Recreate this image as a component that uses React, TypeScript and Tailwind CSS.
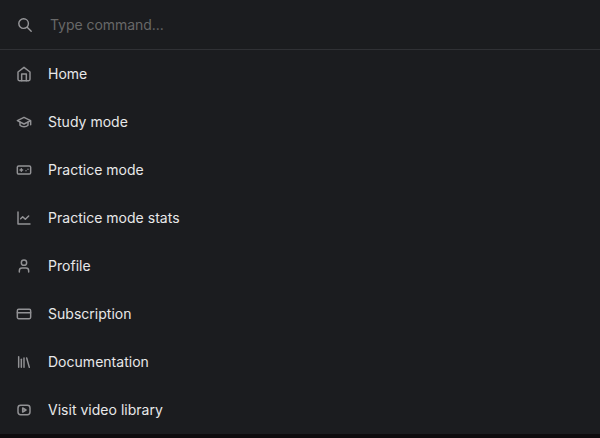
import React from "react";
import { User, CreditCard, Library } from "lucide-react";

const Svg = ({ children }: { children: React.ReactNode }) => (
  <svg viewBox="0 0 24 24" fill="none" stroke="currentColor" strokeWidth="2.2" strokeLinecap="round" strokeLinejoin="round" className="size-4 shrink-0">{children}</svg>
);

const items: { label: string; icon: React.ReactNode }[] = [
  { label: "Home", icon: <Svg><path d="M3 9l9-7 9 7v11a2 2 0 0 1-2 2H5a2 2 0 0 1-2-2z" /><path d="M8.5 22V12h7v10" /></Svg> },
  { label: "Study mode", icon: <Svg><path d="M22 10v6M2 10l10-5 10 5-10 5z" /><path d="M6 12v5c3 3 9 3 12 0v-5" /></Svg> },
  { label: "Practice mode", icon: <Svg><rect x="2" y="6" width="20" height="12" rx="2" /><path d="M6 12h4M8 10v4M15 13h.01M18 11h.01" /></Svg> },
  { label: "Practice mode stats", icon: <Svg><path d="M3 3v18h18" /><path d="M19 9l-5 5-4-4-3 3" /></Svg> },
  { label: "Profile", icon: <User strokeWidth={2.2} className="size-4" /> },
  { label: "Subscription", icon: <CreditCard strokeWidth={2.2} className="size-4" /> },
  { label: "Documentation", icon: <Library strokeWidth={2.2} className="size-4" /> },
  { label: "Visit video library", icon: <Svg><rect x="3" y="5" width="18" height="14" rx="4" /><path d="M10 9l5 3-5 3z" /></Svg> },
];

export default function App() {
  return (
    <div className="flex h-[438px] w-[600px] flex-col bg-[#0e0b0d] font-['Inter',sans-serif]">
      <div className="h-[434px] bg-[#1b1c1f]">
        <div className="flex h-[50px] items-center border-b border-[#303135] pl-4 text-[#98989b]">
          <svg viewBox="0 0 18 18" fill="none" stroke="currentColor" strokeWidth="1.4" strokeLinecap="round" className="size-[18px] shrink-0">
            <circle cx="7.6" cy="7.6" r="4.8" />
            <path d="M11.2 11.2l4 4" />
          </svg>
          <input className="ml-4 mt-px w-96 bg-transparent text-sm tracking-[-0.05px] outline-none placeholder:text-[#686868]" placeholder="Type command..." />
        </div>
        <ul>
          {items.map((item) => (
            <li key={item.label} className="flex h-12 items-center gap-4 px-4 text-[#929295]">
              {item.icon}
              <span className="text-sm tracking-[0.02px] text-[#e8e8e9]">{item.label}</span>
            </li>
          ))}
        </ul>
      </div>
    </div>
  );
}
